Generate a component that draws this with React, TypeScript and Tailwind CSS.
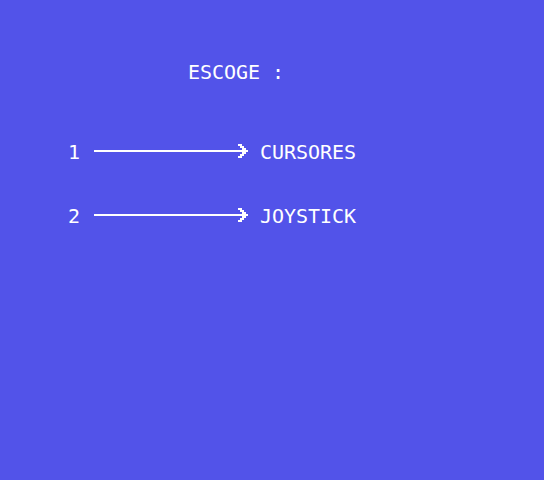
// MSX-style "choose controls" screen: 40-column text grid, 12px per column, 16px per row
const ROW = "flex h-4 items-start whitespace-pre";

// chevron steps (x offsets inside the arrow svg), one 2px row each
const CHEVRON = [146, 148, 150, 152, 150, 148, 146];

function Arrow() {
  // drawn line + chevron spanning columns 5–17
  return (
    <svg width="156" height="16" viewBox="0 0 156 16" className="shrink-0" shapeRendering="crispEdges">
      <rect x="2" y="6" width="150" height="2" fill="#ffffff" />
      {CHEVRON.map((x, i) => (
        <rect key={i} x={x} y={i * 2} width="4" height="2" fill="#ffffff" />
      ))}
    </svg>
  );
}

function Option({ num, label }: { num: string; label: string }) {
  return (
    <div className={ROW}>
      <span>{`   ${num} `}</span>
      <Arrow />
      <span>{` ${label}`}</span>
    </div>
  );
}

export default function App() {
  return (
    <div
      className="flex h-[480px] w-[544px] flex-col bg-[#5253e9] pl-[32px] pt-[64px] text-[20px] leading-[16px] tracking-[-0.04px] text-white"
      style={{ fontFamily: '"DejaVu Sans Mono", "Liberation Mono", monospace' }}
    >
      <div className={ROW}>{"             ESCOGE :"}</div>
      <div className="mt-[64px]">
        <Option num="1" label="CURSORES" />
      </div>
      <div className="mt-[48px]">
        <Option num="2" label="JOYSTICK" />
      </div>
    </div>
  );
}
